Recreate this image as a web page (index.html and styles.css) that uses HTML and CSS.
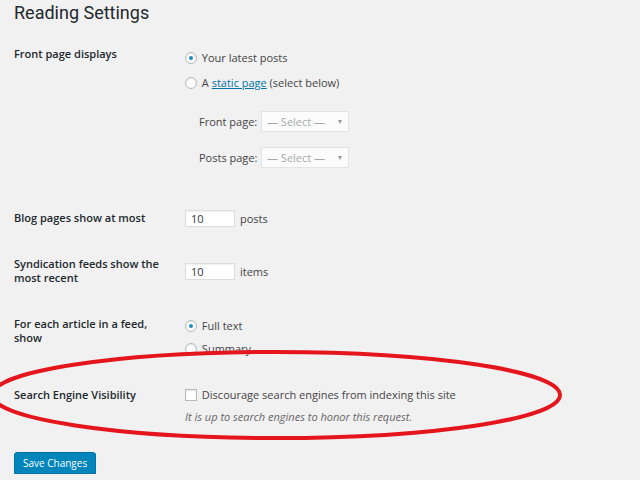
FILE: index.html
```html
<!DOCTYPE html>
<html lang="en">
<head>
    <meta charset="UTF-8">
    <meta name="viewport" content="width=device-width, initial-scale=1.0">
    <title>Reading Settings</title>
    <link rel="stylesheet" href="styles.css">
</head>
<body>

    <div class="wrap">
        <h1>Reading Settings</h1>

        <form class="settings">
            <div class="row row-front">
                <div class="th">Front page displays</div>
                <div class="td">
                    <label class="option"><input type="radio" name="show_on_front" checked> Your latest posts</label>
                    <label class="option"><input type="radio" name="show_on_front"> A&nbsp;<a href="#">static page</a>&nbsp;(select below)</label>
                    <div class="pages">
                        <div class="page-row">
                            <span class="page-label">Front page:</span>
                            <span class="select">— Select —<span class="arrow"></span></span>
                        </div>
                        <div class="page-row">
                            <span class="page-label">Posts page:</span>
                            <span class="select">— Select —<span class="arrow"></span></span>
                        </div>
                    </div>
                </div>
            </div>

            <div class="row row-blog">
                <div class="th">Blog pages show at most</div>
                <div class="td inline">
                    <input type="text" class="small-text" value="10"> posts
                </div>
            </div>

            <div class="row row-feeds">
                <div class="th">Syndication feeds show the most recent</div>
                <div class="td inline">
                    <input type="text" class="small-text" value="10"> items
                </div>
            </div>

            <div class="row row-article">
                <div class="th">For each article in a feed, show</div>
                <div class="td">
                    <label class="option"><input type="radio" name="rss_use_excerpt" checked> Full text</label>
                    <label class="option"><input type="radio" name="rss_use_excerpt"> Summary</label>
                </div>
            </div>

            <div class="row row-search">
                <div class="th">Search Engine Visibility</div>
                <div class="td">
                    <label class="option"><input type="checkbox" name="blog_public"> Discourage search engines from indexing this site</label>
                    <p class="description">It is up to search engines to honor this request.</p>
                </div>
            </div>

            <button type="button" class="button-primary">Save Changes</button>
        </form>
    </div>

    <!-- red marker drawn over the screenshot -->
    <svg class="marker" width="640" height="480" viewBox="0 0 640 480">
        <ellipse cx="276" cy="395" rx="284" ry="43" fill="none" stroke="#e5151d" stroke-width="4"/>
    </svg>

</body>
</html>
```

FILE: styles.css
```css
body {
    margin: 0;
    background-color: #f1f1f1;
    font-family: "Open Sans", "Liberation Sans", sans-serif;
    font-size: 11px;
    color: #444;
}
.wrap {
    padding: 0 14px;
}
h1 {
    margin: 0;
    padding-top: 1px;
    font-family: Roboto, "Open Sans", sans-serif;
    font-size: 18px;
    line-height: 23px;
    font-weight: 400;
    color: #23282d;
}
.row {
    display: grid;
    grid-template-columns: 157px 1fr;
    column-gap: 14px;
    align-items: start;
}
.th {
    font-weight: 600;
    color: #23282d;
    line-height: 14px;
}
.td {
    line-height: 14px;
}
.option {
    display: flex;
    align-items: center;
    height: 14px;
    white-space: pre;
}
.option a {
    color: #0073aa;
}
input[type="radio"],
input[type="checkbox"] {
    appearance: none;
    width: 12px;
    height: 12px;
    margin: 0 2px 0 0;
    border: 1px solid #b4b9be;
    background-color: #fff;
    box-shadow: inset 0 1px 2px rgba(0, 0, 0, 0.1);
    box-sizing: border-box;
    display: grid;
    place-items: center;
}
input[type="radio"] {
    border-radius: 50%;
}
input[type="radio"]:checked::before {
    content: "";
    width: 4px;
    height: 4px;
    border-radius: 50%;
    background-color: #1e8cbe;
}
.small-text {
    width: 50px;
    height: 17px;
    margin: 0 5px 0 0;
    padding: 0 5px;
    border: 1px solid #ddd;
    background-color: #fff;
    box-shadow: inset 0 1px 2px rgba(0, 0, 0, 0.07);
    box-sizing: border-box;
    font: inherit;
    color: #32373c;
}
.inline {
    display: flex;
    align-items: center;
}

/* per row spacing */
.row-front {
    margin-top: 23px;
}
.row-front .td {
    padding-top: 4px;
}
.row-front .option + .option {
    margin-top: 11px;
}
.pages {
    margin-top: 21px;
    padding-left: 14px;
}
.page-row {
    display: flex;
    align-items: center;
    height: 21px;
}
.page-row + .page-row {
    margin-top: 15px;
}
.page-label {
    width: 62px;
}
.select {
    position: relative;
    width: 88px;
    height: 21px;
    padding-left: 5px;
    border: 1px solid #e3e3e3;
    background-color: #fbfbfb;
    box-sizing: border-box;
    line-height: 19px;
    color: #a7aaad;
}
.arrow {
    position: absolute;
    right: 6px;
    top: 8px;
    border-left: 2.5px solid transparent;
    border-right: 2.5px solid transparent;
    border-top: 4px solid #999;
}
.row-blog {
    margin-top: 42px;
}
.row-blog .th {
    padding-top: 1px;
}
.row-feeds {
    margin-top: 30px;
}
.row-feeds .td {
    padding-top: 6px;
}
.row-article {
    margin-top: 32px;
}
.row-article .td {
    padding-top: 2px;
}
.row-article .option + .option {
    margin-top: 9px;
}
.row-search {
    margin-top: 32px;
}
.description {
    margin: 8px 0 0;
    font-style: italic;
    color: #666;
}
.button-primary {
    margin-top: 28px;
    height: 22px;
    padding: 0 8px;
    border: 1px solid #0073aa;
    border-radius: 3px;
    background-color: #0085ba;
    box-shadow: 0 1px 0 #006799;
    color: #fff;
    font-family: inherit;
    font-size: 10px;
    cursor: pointer;
}
.marker {
    position: absolute;
    top: 0;
    left: 0;
    pointer-events: none;
}
```
